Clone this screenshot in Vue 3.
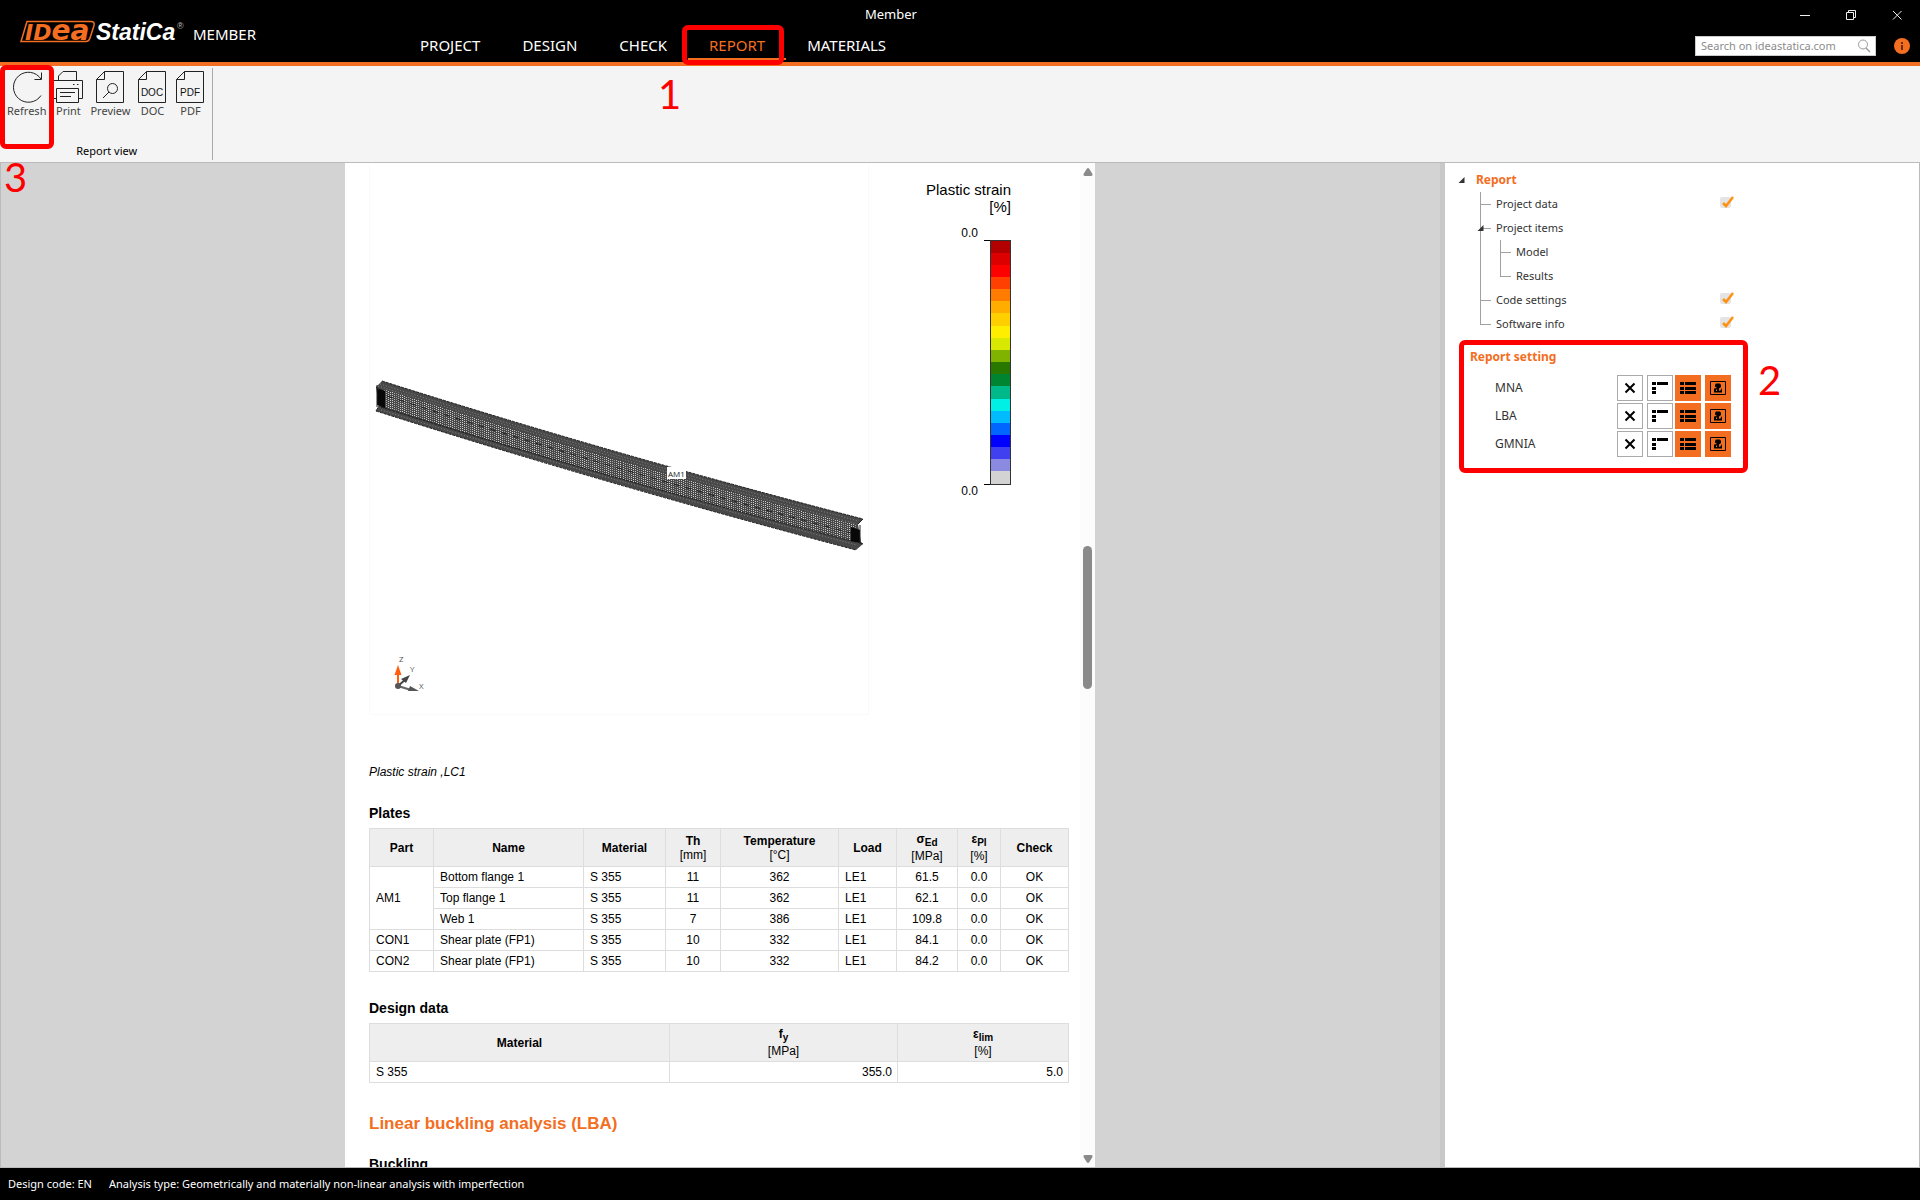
<script setup>
import { ref } from 'vue'

const tabs = ['PROJECT', 'DESIGN', 'CHECK', 'REPORT', 'MATERIALS']
const activeTab = ref('REPORT')
const search = ref('')

const legendColors = [
  '#b20000', '#dc0000', '#ff0000', '#ff4000', '#ff7c00', '#ffae00', '#ffcf00', '#ffee00', '#d9e800', '#80b200',
  '#287800', '#008432', '#00b98a', '#00f0e6', '#00bcff', '#0066ff', '#0000ff', '#4040f0', '#8a8ae0', '#d3d3d3'
]

const plates = [
  { part: 'AM1', span: 3, name: 'Bottom flange 1', th: '11', temp: '362', stress: '61.5' },
  { name: 'Top flange 1', th: '11', temp: '362', stress: '62.1' },
  { name: 'Web 1', th: '7', temp: '386', stress: '109.8' },
  { part: 'CON1', span: 1, name: 'Shear plate (FP1)', th: '10', temp: '332', stress: '84.1' },
  { part: 'CON2', span: 1, name: 'Shear plate (FP1)', th: '10', temp: '332', stress: '84.2' }
]

const tree = ref([
  { label: 'Project data', level: 1, check: true },
  { label: 'Project items', level: 1, open: true },
  { label: 'Model', level: 2 },
  { label: 'Results', level: 2, last: true },
  { label: 'Code settings', level: 1, check: true },
  { label: 'Software info', level: 1, check: true, last: true }
])

const analyses = ['MNA', 'LBA', 'GMNIA']

// Finite element mesh of the member, sampled along its sagging axis
const axisX = t => 13 + 481 * t
const axisY = t => 218 + 138 * t + 16 * t * (1 - t)
const mesh = Array.from({ length: 236 }, (_, i) => {
  const t = (i + 1) / 240
  const x = Math.round(axisX(t)) + 0.5
  const y = axisY(t)
  const o = 0.5 + 0.45 * Math.abs(Math.sin(i * 0.52))
  return { x, y1: Math.round(y + 8), y2: Math.round(y + 25), o: o.toFixed(2) }
})
</script>

<template>
  <div class="app">
    <header class="header">
      <div class="brand">
        <svg class="logo" width="168" height="24" viewBox="0 0 168 24" role="img" aria-label="IDEA StatiCa">
          <path d="M7 1.500H71Q75 1.500 74 5.500L70 18Q69 21.500 66 21.500H1Z" fill="none" stroke="#f36e21" stroke-width="1.500" />
          <text x="5" y="20" class="mark" font-size="22">ID<tspan font-size="28">ea</tspan></text>
          <text x="76" y="20" class="word" font-size="23">StatiCa</text>
          <text x="157" y="9" class="reg" font-size="9">®</text>
        </svg>
        <span class="product">MEMBER</span>
      </div>
      <nav class="tabs">
        <button v-for="t in tabs" :key="t" :class="['tab', { active: t === activeTab }]" @click="activeTab = t">{{ t }}</button>
      </nav>
      <div class="title">Member</div>
      <div class="tools">
        <div class="window-buttons">
          <button aria-label="Minimize"><svg width="12" height="12" viewBox="0 0 12 12"><path d="M1 6.500H11" /></svg></button>
          <button aria-label="Restore"><svg width="12" height="12" viewBox="0 0 12 12"><path d="M1.500 3.500H8.500V10.500H1.500ZM3.500 3V1.500H10.500V8.500H9" /></svg></button>
          <button aria-label="Close"><svg width="12" height="12" viewBox="0 0 12 12"><path d="M2 2L10.500 10.500M10.500 2L2 10.500" /></svg></button>
        </div>
        <div class="search-row">
          <label class="search">
            <input v-model="search" type="text" placeholder="Search on ideastatica.com" aria-label="Search on ideastatica.com" />
            <svg width="14" height="14" viewBox="0 0 14 14"><circle cx="6" cy="5.500" r="4.500" fill="none" stroke="#999" /><path d="M9 9L13 13" stroke="#999" stroke-width="1.400" /></svg>
          </label>
          <button class="info" aria-label="Information">
            <svg width="16" height="16" viewBox="0 0 16 16"><circle cx="8" cy="8" r="8" fill="#f36e21" /><path d="M7 4H9V6H7ZM7 7H9V12H7Z" fill="#6b2d08" /></svg>
          </button>
        </div>
      </div>
    </header>

    <section class="ribbon">
      <div class="group">
        <div class="commands">
          <button class="command">
            <svg width="32" height="33" viewBox="0 0 32 33"><path d="M30 25.500A15 15 0 1 1 30 9M30.500 2.500V9.500H23.500" /></svg>
            <span>Refresh</span>
          </button>
          <button class="command">
            <svg width="32" height="33" viewBox="0 0 32 33"><path d="M6.500 10V6L11 1.500H24.500V10M5 28.500H1.500V10.500H30.500V28.500H27M5 18.500H26.500V32.500H4.500V18.500ZM8 22.500H23M8 26.500H19M21 14.500H22.500M25 14.500H26.500" /></svg>
            <span>Print</span>
          </button>
          <button class="command">
            <svg width="28" height="33" viewBox="0 0 28 33"><path d="M8.500 1.500H27.500V32.500H0.500V9.500ZM8.500 1.500V9.500H0.500" /><circle cx="16.500" cy="18.500" r="5" /><path d="M13 22L7 28" /></svg>
            <span>Preview</span>
          </button>
          <button class="command">
            <svg width="28" height="33" viewBox="0 0 28 33"><path d="M8.500 1.500H27.500V32.500H0.500V9.500ZM8.500 1.500V9.500H0.500" /><text x="14" y="26">DOC</text></svg>
            <span>DOC</span>
          </button>
          <button class="command">
            <svg width="28" height="33" viewBox="0 0 28 33"><path d="M8.500 1.500H27.500V32.500H0.500V9.500ZM8.500 1.500V9.500H0.500" /><text x="14" y="26">PDF</text></svg>
            <span>PDF</span>
          </button>
        </div>
        <div class="group-name">Report view</div>
      </div>
    </section>

    <main class="main">
      <div class="viewer">
        <div class="sheet">
          <article class="report">
            <div class="figure">
              <svg class="model" width="500" height="552" viewBox="0 0 500 552">
                <path d="M0.500 0V551.500H499.500V0" fill="none" stroke="#fafafa" />
                <path d="M7 224L13 218Q250 293 494 356L489 361L492 379L494 381L487 387Q240 322 7 248L10 244Z" fill="#484848" />
                <g stroke="#d8d8d8" stroke-dasharray="1 1">
                  <path v-for="m in mesh" :key="m.x" :d="`M${m.x} ${m.y1}V${m.y2}`" :stroke-opacity="m.o" />
                </g>
                <g fill="none" stroke="#8c8c8c" stroke-dasharray="1 2">
                  <path d="M11 221Q250 296 490 358M9 223Q250 298 488 361" />
                  <path d="M12 247Q240 318 488 382" />
                </g>
                <g fill="none" stroke="#1c1c1c">
                  <path d="M13 218Q250 293 494 356" stroke-dasharray="3 1" />
                  <path d="M12 244Q240 316 487 379M7 248Q240 322 487 387" stroke-dasharray="3 1" />
                  <path d="M18 233Q250 309 486 371" stroke-dasharray="6 6" />
                </g>
                <path d="M8 225L16 228V245L8 242ZM482 364L491 367V380L482 378Z" fill="#080808" />
                <path d="M7 224L10 227M7 248L10 243M494 356L489 361M494 381L490 379M8 222V244M491 362V381" stroke="#222" />
                <rect x="298" y="304" width="19" height="12" fill="#fff" />
                <text x="299" y="314" font-size="8" fill="#222">AM1</text>
                <g>
                  <path d="M29 523V507" stroke="#ff6010" stroke-width="2" />
                  <path d="M29 502L25.500 512H32.500Z" fill="#ff6010" />
                  <path d="M29 523L37 516" stroke="#444" stroke-width="2" />
                  <path d="M41 512L32 516L37 520Z" fill="#444" />
                  <path d="M29 523L42 527" stroke="#666" stroke-width="2" />
                  <path d="M50 528L41 523L39 528Z" fill="#555" />
                  <circle cx="29" cy="523" r="3" fill="#555" />
                  <text x="30" y="499" font-size="8" fill="#555">Z</text>
                  <text x="41" y="509" font-size="8" fill="#555">Y</text>
                  <text x="50" y="526" font-size="8" fill="#555">X</text>
                </g>
              </svg>
              <div class="legend">
                <div>Plastic strain<br />[%]</div>
                <div class="scale">
                  <div class="limits"><span>0.0</span><span>0.0</span></div>
                  <div class="ticks"></div>
                  <div class="bar"><i v-for="c in legendColors" :key="c" :style="{ background: c }"></i></div>
                </div>
              </div>
            </div>
            <p class="caption">Plastic strain ,LC1</p>

            <h3>Plates</h3>
            <table class="plates">
              <colgroup>
                <col style="width: 64px" /><col style="width: 150px" /><col style="width: 82px" /><col style="width: 55px" /><col style="width: 118px" /><col style="width: 58px" /><col style="width: 61px" /><col style="width: 43px" /><col style="width: 68px" />
              </colgroup>
              <thead>
                <tr>
                  <th>Part</th>
                  <th>Name</th>
                  <th>Material</th>
                  <th>Th<br /><small>[mm]</small></th>
                  <th>Temperature<br /><small>[°C]</small></th>
                  <th>Load</th>
                  <th>σ<sub>Ed</sub><br /><small>[MPa]</small></th>
                  <th>ε<sub>Pl</sub><br /><small>[%]</small></th>
                  <th>Check</th>
                </tr>
              </thead>
              <tbody>
                <tr v-for="p in plates" :key="p.name + p.part">
                  <td v-if="p.part" :rowspan="p.span">{{ p.part }}</td>
                  <td>{{ p.name }}</td>
                  <td>S 355</td>
                  <td class="center">{{ p.th }}</td>
                  <td class="center">{{ p.temp }}</td>
                  <td>LE1</td>
                  <td class="center">{{ p.stress }}</td>
                  <td class="center">0.0</td>
                  <td class="center">OK</td>
                </tr>
              </tbody>
            </table>

            <h3 class="spaced">Design data</h3>
            <table>
              <colgroup><col style="width: 300px" /><col style="width: 228px" /><col style="width: 171px" /></colgroup>
              <thead>
                <tr>
                  <th>Material</th>
                  <th>f<sub>y</sub><br /><small>[MPa]</small></th>
                  <th>ε<sub>lim</sub><br /><small>[%]</small></th>
                </tr>
              </thead>
              <tbody>
                <tr><td>S 355</td><td class="right">355.0</td><td class="right">5.0</td></tr>
              </tbody>
            </table>

            <h2>Linear buckling analysis (LBA)</h2>
            <h3>Buckling</h3>
          </article>
          <div class="scrollbar">
            <svg width="10" height="8" viewBox="0 0 10 8"><path d="M5 0Q6 0 7 2L9.500 6Q10 8 8 8H2Q0 8 0.500 6L3 2Q4 0 5 0Z" fill="#8a8a8a" /></svg>
            <div class="track"><div class="thumb"></div></div>
            <svg width="10" height="8" viewBox="0 0 10 8"><path d="M5 8Q4 8 3 6L0.500 2Q0 0 2 0H8Q10 0 9.500 2L7 6Q6 8 5 8Z" fill="#8a8a8a" /></svg>
          </div>
        </div>
      </div>

      <aside class="panel">
        <div class="tree-root">
          <svg width="7" height="7" viewBox="0 0 7 7"><path d="M6.500 0V6H0.500Z" fill="#333" /></svg>
          <strong>Report</strong>
        </div>
        <ul class="tree">
          <li v-for="n in tree" :key="n.label" :class="['node', 'level' + n.level, { last: n.last }]">
            <svg v-if="n.open" class="expander" width="7" height="7" viewBox="0 0 7 7"><path d="M6.500 0V6H0.500Z" fill="#333" /></svg>
            <label v-if="'check' in n">
              <span>{{ n.label }}</span>
              <span class="tick">
                <input v-model="n.check" type="checkbox" />
                <svg v-if="n.check" width="14" height="14" viewBox="0 0 14 14"><path d="M3 7L6 10L13 1" fill="none" stroke="#ff9010" stroke-width="2.500" /></svg>
              </span>
            </label>
            <span v-else>{{ n.label }}</span>
          </li>
        </ul>

        <section class="settings">
          <h4>Report setting</h4>
          <div v-for="a in analyses" :key="a" class="setting">
            <span>{{ a }}</span>
            <div class="options">
              <button :aria-label="a + ' off'"><svg width="16" height="16" viewBox="0 0 16 16"><path d="M3.500 3.500L12.500 12.500M12.500 3.500L3.500 12.500" stroke="#000" stroke-width="2" /></svg></button>
              <button :aria-label="a + ' brief'"><svg width="16" height="16" viewBox="0 0 16 16"><path d="M0 2H4V5H0ZM5 2H16V5H5ZM0 7H4V10H0ZM0 11H4V14H0Z" /></svg></button>
              <button class="on" :aria-label="a + ' detailed'"><svg width="16" height="16" viewBox="0 0 16 16"><path d="M0 2H4V5H0ZM5 2H16V5H5ZM0 7H4V10H0ZM5 7H16V10H5ZM0 11H4V14H0ZM5 11H16V14H5Z" /></svg></button>
              <button class="on" :aria-label="a + ' pictures'"><svg width="16" height="16" viewBox="0 0 16 16"><path d="M0.500 1.500H15.500V14.500H0.500Z" fill="none" stroke="#000" /><path d="M6 3.500H10L11 5V7L9 8.500V10.500L10 11L12 8V12.500H4V8.500L7 8L5 6.500V5Z" /><path d="M6 9.500H7V11H6Z" fill="#f36e21" /></svg></button>
            </div>
          </div>
          <span class="callout two">2</span>
        </section>
      </aside>
    </main>

    <footer class="status">
      <span>Design code: EN</span>
      <span>Analysis type: Geometrically and materially non-linear analysis with imperfection</span>
    </footer>

    <div class="mark-box box-one"></div>
    <span class="callout one">1</span>
    <div class="mark-box box-three"></div>
    <span class="callout three">3</span>
  </div>
</template>

<style>
body {
  margin: 0;
}
</style>

<style scoped>
* {
  box-sizing: border-box;
}
.app {
  position: relative;
  display: flex;
  flex-direction: column;
  height: 100vh;
  overflow: hidden;
  font: 11px/16px "Noto Sans", "Open Sans", sans-serif;
  color: #333;
}
button {
  padding: 0;
  border: 0;
  background: none;
  font: inherit;
  color: inherit;
}
svg {
  display: block;
}

/* Title bar */
.header {
  position: relative;
  display: flex;
  flex: none;
  height: 66px;
  background: #000;
  border-bottom: 4px solid #f36e21;
  color: #fff;
}
.brand {
  display: flex;
  align-items: flex-start;
  gap: 5px;
  width: 399px;
  padding: 20px 0 0 20px;
}
.logo {
  overflow: visible;
}
.mark {
  font-family: "DejaVu Sans", sans-serif;
  font-weight: bold;
  font-style: italic;
  fill: #f36e21;
}
.word {
  font-family: "Liberation Sans", sans-serif;
  font-weight: bold;
  font-style: italic;
  fill: #fff;
}
.reg {
  font-family: "Liberation Sans", sans-serif;
  fill: #bbb;
}
.product {
  font-size: 15px;
  line-height: 20px;
  padding-top: 4px;
}
.tabs {
  display: flex;
  align-items: flex-end;
  padding-bottom: 2px;
}
.tab {
  height: 30px;
  padding: 2px 21px 0;
  border-bottom: 2px solid transparent;
  font-size: 15px;
  line-height: 20px;
}
.tab.active {
  color: #f36e21;
  border-color: #f36e21;
}
.title {
  position: absolute;
  top: 4px;
  right: 0;
  left: 0;
  padding-right: 138px;
  text-align: center;
  font-size: 13px;
  line-height: 20px;
  pointer-events: none;
}
.tools {
  display: flex;
  flex-direction: column;
  gap: 15px;
  margin-left: auto;
  padding: 9px 10px 0 0;
}
.window-buttons {
  display: flex;
  justify-content: flex-end;
  gap: 34px;
  padding-right: 7px;
}
.window-buttons path {
  fill: none;
  stroke: #eee;
}
.search-row {
  display: flex;
  align-items: center;
  gap: 18px;
}
.search {
  display: flex;
  align-items: center;
  width: 181px;
  height: 20px;
  padding: 0 4px 0 5px;
  background: #fff;
  border: 1px solid #ccc;
}
.search input {
  flex: 1;
  min-width: 0;
  padding: 0;
  border: 0;
  outline: 0;
  background: none;
  font: inherit;
}
.search input::placeholder {
  color: #8c8c8c;
}

/* Ribbon */
.ribbon {
  display: flex;
  flex: none;
  height: 97px;
  padding: 2px 0;
  background: #f4f4f4;
  border-bottom: 1px solid #bbb;
}
.group {
  display: flex;
  flex-direction: column;
  justify-content: space-between;
  padding: 2px 6px 1px 7px;
  border-right: 1px solid #aaa;
}
.commands {
  display: flex;
  gap: 6px;
}
.command {
  display: flex;
  flex-direction: column;
  align-items: center;
  min-width: 32px;
  color: #444;
}
.command svg {
  fill: none;
  stroke: #222;
}
.command text {
  fill: #111;
  stroke: none;
  font-family: "Liberation Sans", sans-serif;
  font-size: 10px;
  text-anchor: middle;
}
.group-name {
  text-align: center;
  color: #000;
}

/* Report preview */
.main {
  display: flex;
  flex: 1;
  min-height: 0;
  background: #d3d3d3;
  border: 1px solid #bbb;
  border-top: 0;
}
.viewer {
  display: flex;
  flex: 1;
  justify-content: center;
  min-width: 0;
  padding-right: 1px;
}
.sheet {
  display: flex;
  width: 750px;
  background: #fff;
}
.report {
  flex: 1;
  padding: 0 11px 0 24px;
  overflow: hidden;
  font: 12px/14px "Liberation Sans", sans-serif;
  color: #000;
}
.figure {
  display: flex;
}
.model text {
  font-family: "Open Sans", sans-serif;
}
.legend {
  width: 142px;
  padding-top: 18px;
  text-align: right;
  font-size: 15px;
  line-height: 17px;
}
.scale {
  display: flex;
  justify-content: flex-end;
  align-items: center;
  margin-top: 11px;
  font-size: 12px;
  line-height: 14px;
}
.limits {
  display: flex;
  flex-direction: column;
  justify-content: space-between;
  height: 272px;
  margin-right: 6px;
}
.ticks {
  width: 6px;
  height: 245px;
  border: 1px solid #000;
  border-width: 1px 0;
}
.bar {
  display: flex;
  flex-direction: column;
  width: 21px;
  height: 245px;
  border: 1px solid #333;
}
.bar i {
  flex: 1;
}
.caption {
  margin: 50px 0 0;
  font-style: italic;
}
h3 {
  margin: 26px 0 7px;
  font-size: 14px;
  line-height: 16px;
}
h3.spaced {
  margin-top: 28px;
}
h2 {
  margin: 31px 0 22px;
  font-size: 17px;
  line-height: 20px;
  color: #f36e21;
}
h2 + h3 {
  margin-top: 22px;
}
table {
  width: 700px;
  table-layout: fixed;
  border-collapse: collapse;
}
th,
td {
  height: 21px;
  padding: 0 6px;
  border: 1px solid #ddd;
  text-align: left;
}
th {
  height: 38px;
  padding: 0;
  background: #eee;
  text-align: center;
}
th small {
  font-size: 12px;
  font-weight: normal;
}
th sub {
  font-size: 10px;
  line-height: 12px;
  vertical-align: -3px;
}
.center {
  padding: 0;
  text-align: center;
}
td.right {
  padding-right: 5px;
  text-align: right;
}
.scrollbar {
  display: flex;
  flex-direction: column;
  align-items: center;
  gap: 2px;
  width: 15px;
  padding: 5px 0 4px;
  background: #fcfcfc;
}
.track {
  flex: 1;
}
.thumb {
  width: 9px;
  height: 143px;
  margin-top: 368px;
  border-radius: 5px;
  background: #8a8a8a;
}

/* Side panel */
.panel {
  width: 479px;
  padding: 5px 0 0 13px;
  background: #fff;
  border-left: 5px solid #c8c8c8;
}
.tree-root {
  display: flex;
  align-items: center;
  gap: 11px;
  height: 24px;
  font-size: 12px;
  color: #f36e21;
}
.tree {
  margin: 0;
  padding: 0 0 0 22px;
  list-style: none;
}
.node {
  position: relative;
  display: flex;
  align-items: center;
  height: 24px;
  padding-left: 16px;
}
.node::before {
  content: "";
  position: absolute;
  top: 0;
  left: 0;
  height: 24px;
  border-left: 1px solid #a0a0a0;
}
.node::after {
  content: "";
  position: absolute;
  top: 12px;
  left: 0;
  width: 11px;
  border-top: 1px solid #a0a0a0;
}
.level1.last::before {
  height: 12px;
}
.level2 {
  padding-left: 36px;
  background: linear-gradient(#a0a0a0, #a0a0a0) 20px 0 / 1px 24px no-repeat;
}
.level2.last {
  background-size: 1px 12px;
}
.level2::after {
  left: 20px;
}
.expander {
  position: absolute;
  top: 9px;
  left: -3px;
  z-index: 1;
}
.node label {
  display: flex;
  align-items: center;
  width: 236px;
}
.tick {
  position: relative;
  margin-left: auto;
}
.tick input {
  display: block;
  width: 11px;
  height: 11px;
  margin: 0 1px 4px 0;
  appearance: none;
  background: #e4e4e4;
  border-radius: 2px;
}
.tick svg {
  position: absolute;
  top: -1px;
  left: 0;
  pointer-events: none;
}
.settings {
  position: relative;
  width: 289px;
  height: 133px;
  margin: 4px 0 0 1px;
  padding: 4px 6px;
  border: 5px solid #f00;
  border-radius: 6px;
}
h4 {
  margin: 0 0 9px;
  font-size: 12px;
  line-height: 16px;
  color: #f36e21;
}
.setting {
  display: flex;
  justify-content: space-between;
  align-items: center;
  height: 28px;
  padding: 0 6px 0 25px;
  font-size: 12px;
}
.options {
  display: grid;
  grid-template-columns: 30px 28px 30px 26px;
}
.options button {
  display: grid;
  place-items: center;
  width: 26px;
  height: 26px;
  background: #fff;
  border: 1px solid #aaa;
}
.options .on {
  background: #f36e21;
  border-color: #f36e21;
}

/* Status bar */
.status {
  display: flex;
  flex: none;
  align-items: center;
  gap: 17px;
  height: 32px;
  padding-left: 8px;
  background: #000;
  color: #fff;
}

/* Step annotations */
.mark-box {
  position: absolute;
  border: 5px solid #f00;
  border-radius: 6px;
  pointer-events: none;
}
.box-one {
  top: 25px;
  left: 682px;
  width: 102px;
  height: 40px;
}
.box-three {
  top: 65px;
  left: 0;
  width: 54px;
  height: 84px;
}
.callout {
  position: absolute;
  font: 40px/48px Lato, sans-serif;
  color: #f00;
}
.callout.one {
  top: 70px;
  left: 658px;
}
.callout.two {
  top: 11px;
  left: 294px;
}
.callout.three {
  top: 153px;
  left: 4px;
}
</style>
